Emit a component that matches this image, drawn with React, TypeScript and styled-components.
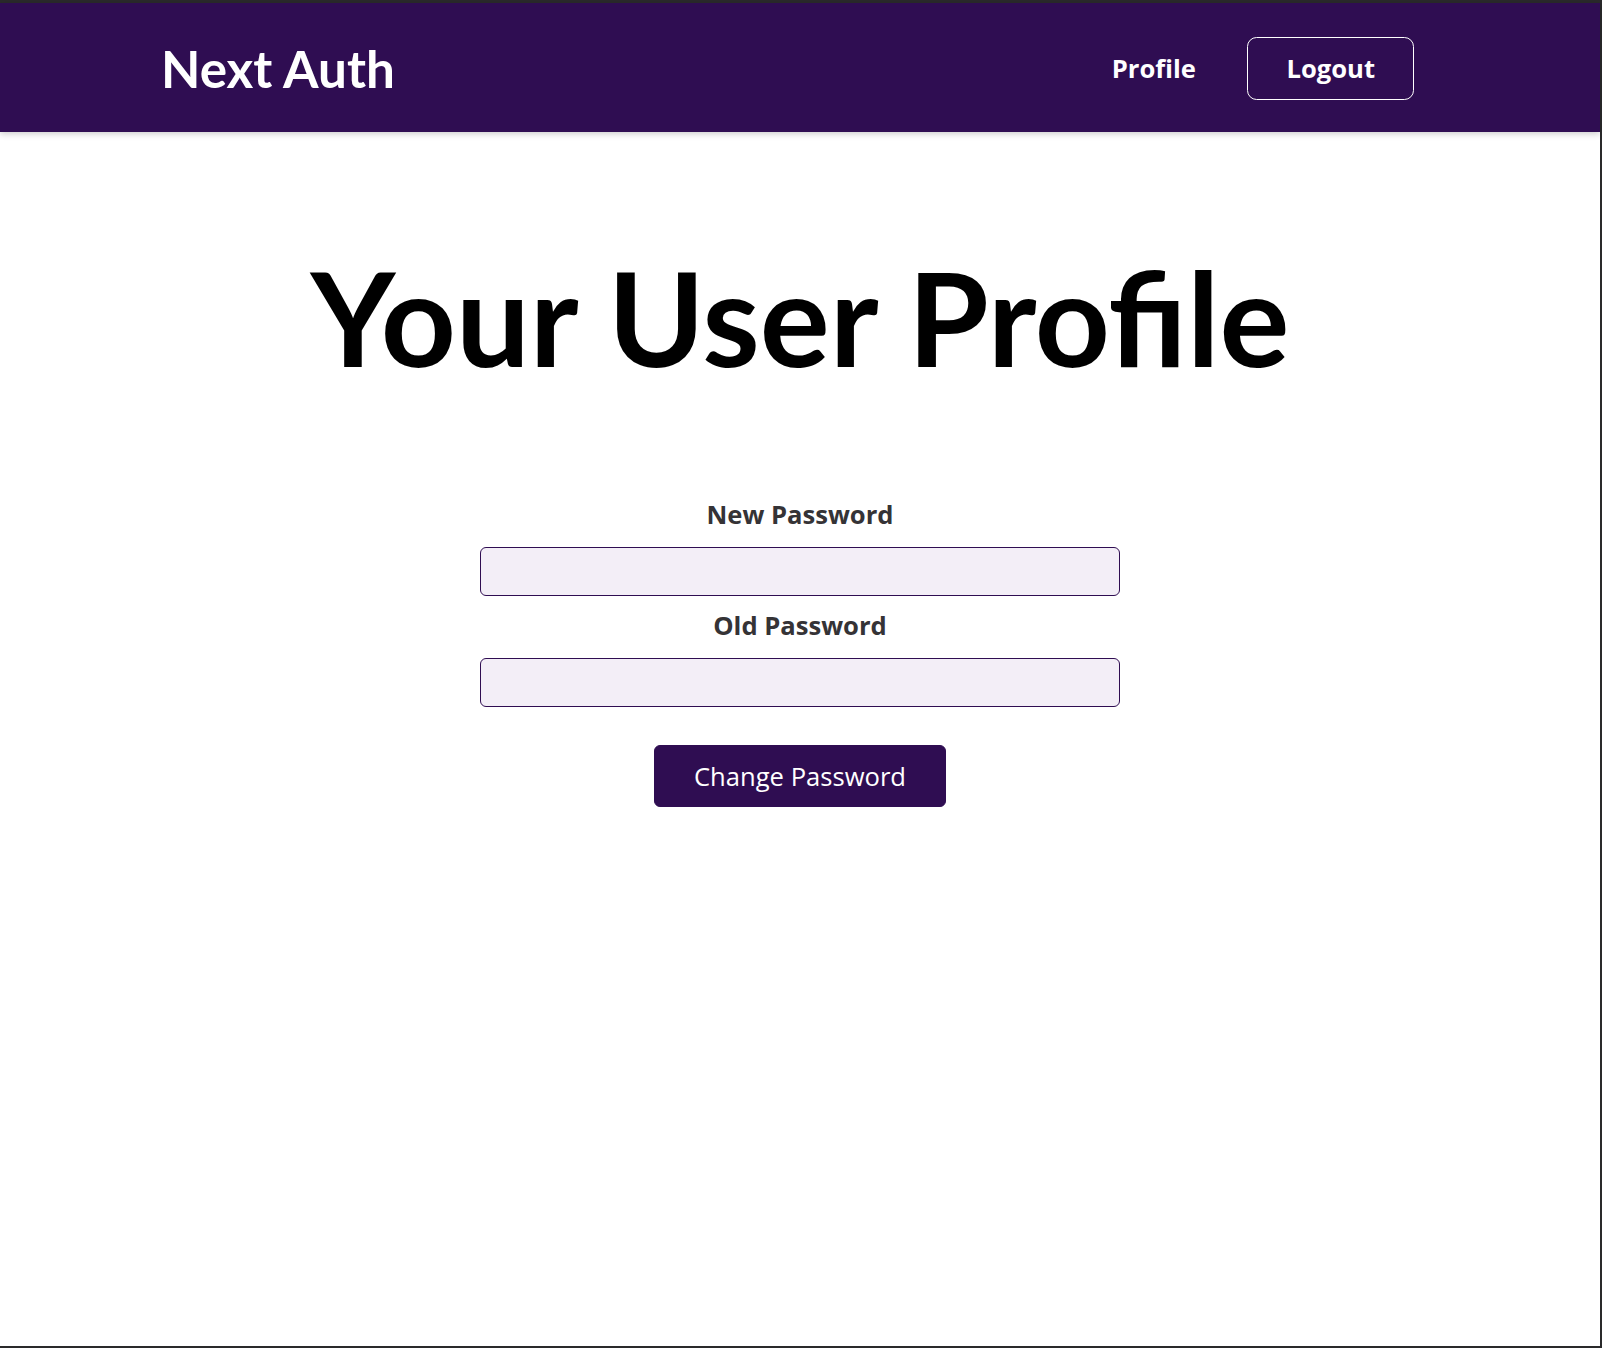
import React from "react";
import styled, { createGlobalStyle } from "styled-components";

const Global = createGlobalStyle`
  * { box-sizing: border-box; }
  html, body { margin: 0; padding: 0; background: #ffffff; }
  body { font-family: "Open Sans", "Liberation Sans", sans-serif; }
`;

const Frame = styled.div`
  min-height: 100vh;
  display: flex;
  flex-direction: column;
  background: #ffffff;
  border-top: 3px solid #2a2a2b;
  border-right: 2px solid #2a2a2b;
  border-bottom: 2px solid #2a2a2b;
`;

const Header = styled.header`
  height: 129px;
  background-color: #2f0d52;
  box-shadow: 0 1.6px 6.4px rgba(0, 0, 0, 0.2);
  display: flex;
  justify-content: space-between;
  align-items: center;
  padding: 0 160px 0 161px;
  position: relative;
  z-index: 1;
`;

const Logo = styled.div`
  font-family: "Lato", "Liberation Sans", sans-serif;
  font-weight: 700;
  font-size: 51.2px;
  color: #ffffff;
  margin: 0;
`;

const Nav = styled.nav`
  margin-top: 2px;
`;

const NavList = styled.ul`
  list-style: none;
  margin: 0;
  padding: 0;
  display: flex;
  align-items: baseline;
`;

const NavItem = styled.li`
  margin: 0 25.6px;
`;

const NavLink = styled.a`
  text-decoration: none;
  color: #ffffff;
  font-weight: 700;
  font-size: 25.6px;
  font-family: "Open Sans", "Liberation Sans", sans-serif;
`;

const LogoutButton = styled.button`
  font-family: "Open Sans", "Liberation Sans", sans-serif;
  font-size: 25.6px;
  line-height: normal;
  background-color: transparent;
  border: 1px solid #ffffff;
  color: #ffffff;
  font-weight: 700;
  padding: 12.8px 38.4px;
  border-radius: 9.6px;
  cursor: pointer;
`;

const Main = styled.main`
  display: flex;
  flex-direction: column;
  align-items: center;
  padding-top: 106px;
`;

const Title = styled.h1`
  font-family: "Lato", "Liberation Sans", sans-serif;
  font-weight: 700;
  font-size: 131px;
  line-height: 1.2;
  color: #000000;
  margin: 0;
  text-align: center;
`;

const Form = styled.form`
  width: 640px;
  margin-top: 103px;
  display: flex;
  flex-direction: column;
`;

const Control = styled.div`
  margin-bottom: 13px;
  display: flex;
  flex-direction: column;
`;

const Label = styled.label`
  display: block;
  font-weight: 700;
  font-size: 25.6px;
  line-height: 1.362;
  color: #353336;
  text-align: center;
  margin-bottom: 14px;
`;

const Input = styled.input`
  display: block;
  font: inherit;
  font-size: 25.6px;
  width: 100%;
  border-radius: 6px;
  border: 1px solid #2f0d52;
  background-color: #f3eef7;
  color: #2f0d52;
  padding: 6.4px;
  height: 49px;
  outline: none;
`;

const Actions = styled.div`
  margin-top: 25px;
  display: flex;
  justify-content: center;
`;

const SubmitButton = styled.button`
  font-family: "Open Sans", "Liberation Sans", sans-serif;
  font-size: 25.6px;
  line-height: normal;
  color: #ffffff;
  background-color: #2f0d52;
  border: 1px solid #2f0d52;
  border-radius: 6px;
  padding: 12.8px 39.4px;
  cursor: pointer;
`;

export default function App() {
  return (
    <>
      <Global />
      <Frame>
        <Header>
          <Logo>Next Auth</Logo>
          <Nav>
            <NavList>
              <NavItem>
                <NavLink href="#">Profile</NavLink>
              </NavItem>
              <NavItem>
                <LogoutButton type="button">Logout</LogoutButton>
              </NavItem>
            </NavList>
          </Nav>
        </Header>
        <Main>
          <Title>Your User Profile</Title>
          <Form onSubmit={(e) => e.preventDefault()}>
            <Control>
              <Label htmlFor="new-password">New Password</Label>
              <Input type="password" id="new-password" />
            </Control>
            <Control>
              <Label htmlFor="old-password">Old Password</Label>
              <Input type="password" id="old-password" />
            </Control>
            <Actions>
              <SubmitButton type="submit">Change Password</SubmitButton>
            </Actions>
          </Form>
        </Main>
      </Frame>
    </>
  );
}
